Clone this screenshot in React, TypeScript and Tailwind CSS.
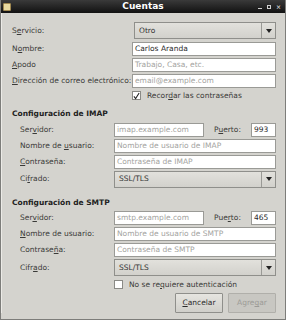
import type { ReactNode } from "react";

function Field({ value, placeholder, className = "" }: { value?: string; placeholder?: string; className?: string }) {
  return (
    <div
      className={`h-[14px] bg-white border border-[#9a9a96] flex items-center px-[2px] overflow-hidden whitespace-nowrap ${className}`}
    >
      {value ? (
        <span className="text-[#2a2a2a]">{value}</span>
      ) : (
        <span className="text-[#a3a3a0]">{placeholder}</span>
      )}
    </div>
  );
}

function Combo({ value, className = "" }: { value: string; className?: string }) {
  return (
    <div
      className={`h-[17px] border border-[#8f8f8b] bg-gradient-to-b from-[#e2e1dc] to-[#d2d1cc] flex items-stretch ${className}`}
    >
      <span className="flex-1 flex items-center pl-[4px] text-[#333]">{value}</span>
      <span className="w-[14px] border-l border-[#9a9a96] flex items-center justify-center">
        <svg width="6" height="4" viewBox="0 0 6 4">
          <path d="M0 0h6L3 4z" fill="#222" />
        </svg>
      </span>
    </div>
  );
}

function Label({ children, w }: { children: ReactNode; w: string }) {
  return <span className={`${w} shrink-0 text-[#3a3a38]`}>{children}</span>;
}

function Check({ checked, children }: { checked?: boolean; children: ReactNode }) {
  return (
    <div className="flex items-center gap-[6px]">
      <span className="w-[9px] h-[9px] bg-white border border-[#8a8a86] flex items-center justify-center">
        {checked && (
          <svg width="8" height="8" viewBox="0 0 8 8">
            <path d="M1 4.5 3 7 7 0.5" stroke="#222" strokeWidth="1.2" fill="none" />
          </svg>
        )}
      </span>
      <span className="text-[#3a3a38]">{children}</span>
    </div>
  );
}

export default function App() {
  return (
    <div
      className="w-[286px] h-[320px] bg-[#d4d3ce] flex flex-col text-[7.5px] leading-none overflow-hidden border-l border-r border-b border-[#7d7d7a]"
      style={{ fontFamily: '"DejaVu Sans", sans-serif' }}
    >
      {/* title bar */}
      <div className="h-[13px] shrink-0 bg-gradient-to-b from-[#3a3a3a] to-[#121212] flex items-center px-[2px] relative">
        <span className="w-[8px] h-[8px] bg-[#e8d9a0] border border-[#a08850] rounded-[1px]" />
        <span className="absolute left-0 right-0 text-center font-bold text-white text-[9px]">Cuentas</span>
        <span className="ml-auto flex items-center gap-[5px] text-[#d0d0d0] text-[6px] pr-[2px]">
          <span className="w-[4px] h-[1px] bg-[#d0d0d0] mt-[3px]" />
          <span className="w-[4px] h-[4px] border border-[#d0d0d0]" />
          <span className="font-bold">×</span>
        </span>
      </div>

      <div className="flex flex-col pl-[10px] pr-[9px] border-l border-[#ecebe7]">
        {/* account */}
        <div className="flex items-center mt-[9px]">
          <Label w="w-[122px]">
            S<u>e</u>rvicio:
          </Label>
          <Combo value="Otro" className="flex-1 h-[16px]" />
        </div>
        <div className="flex items-center mt-[3px]">
          <Label w="w-[120px]">
            N<u>o</u>mbre:
          </Label>
          <Field value="Carlos Aranda" className="flex-1" />
        </div>
        <div className="flex items-center mt-[2px]">
          <Label w="w-[120px]">
            <u>A</u>podo
          </Label>
          <Field placeholder="Trabajo, Casa, etc." className="flex-1" />
        </div>
        <div className="flex items-center mt-[2px]">
          <Label w="w-[120px]">
            <u>D</u>irección de correo electrónico:
          </Label>
          <Field placeholder="email@example.com" className="flex-1" />
        </div>
        <div className="mt-[3px] pl-[120px]">
          <Check checked>
            Recor<u>d</u>ar las contraseñas
          </Check>
        </div>

        {/* IMAP */}
        <div className="mt-[10px] font-bold text-[#222] text-[7.5px]">Configuración de IMAP</div>
        <div className="pl-[8px] flex flex-col">
          <div className="flex items-center mt-[5px]">
            <Label w="w-[94px]">
              Ser<u>v</u>idor:
            </Label>
            <Field placeholder="imap.example.com" className="w-[90px]" />
            <span className="ml-[10px] w-[37px] text-[#3a3a38]">
              P<u>u</u>erto:
            </span>
            <Field value="993" className="flex-1" />
          </div>
          <div className="flex items-center mt-[2px]">
            <Label w="w-[94px]">
              Nombre de <u>u</u>suario:
            </Label>
            <Field placeholder="Nombre de usuario de IMAP" className="flex-1" />
          </div>
          <div className="flex items-center mt-[2px]">
            <Label w="w-[94px]">
              <u>C</u>ontraseña:
            </Label>
            <Field placeholder="Contraseña de IMAP" className="flex-1" />
          </div>
          <div className="flex items-center mt-[2px]">
            <Label w="w-[94px]">
              Ci<u>f</u>rado:
            </Label>
            <Combo value="SSL/TLS" className="flex-1" />
          </div>
        </div>

        {/* SMTP */}
        <div className="mt-[11px] font-bold text-[#222] text-[7.5px]">Configuración de SMTP</div>
        <div className="pl-[8px] flex flex-col">
          <div className="flex items-center mt-[5px]">
            <Label w="w-[94px]">
              Ser<u>v</u>idor:
            </Label>
            <Field placeholder="smtp.example.com" className="w-[90px]" />
            <span className="ml-[10px] w-[37px] text-[#3a3a38]">
              Pue<u>r</u>to:
            </span>
            <Field value="465" className="flex-1" />
          </div>
          <div className="flex items-center mt-[2px]">
            <Label w="w-[94px]">
              <u>N</u>ombre de usuario:
            </Label>
            <Field placeholder="Nombre de usuario de SMTP" className="flex-1" />
          </div>
          <div className="flex items-center mt-[2px]">
            <Label w="w-[94px]">
              Contrase<u>ñ</u>a:
            </Label>
            <Field placeholder="Contraseña de SMTP" className="flex-1" />
          </div>
          <div className="flex items-center mt-[2px]">
            <Label w="w-[94px]">
              Cifr<u>a</u>do:
            </Label>
            <Combo value="SSL/TLS" className="flex-1" />
          </div>
          <div className="mt-[4px] pl-[94px]">
            <Check>
              No se re<u>q</u>uiere autenticación
            </Check>
          </div>
        </div>

        {/* buttons */}
        <div className="flex justify-end gap-[5px] mt-[4px]">
          <button className="w-[48px] h-[20px] border border-[#8f8f8b] bg-gradient-to-b from-[#e6e5e0] to-[#d0cfca] text-[#2a2a2a] rounded-[1px]">
            <u>C</u>ancelar
          </button>
          <button className="w-[48px] h-[20px] border border-[#b0afaa] bg-[#c8c7c2] text-[#9c9b97] rounded-[1px]">
            Agre<u>g</u>ar
          </button>
        </div>
      </div>
    </div>
  );
}
